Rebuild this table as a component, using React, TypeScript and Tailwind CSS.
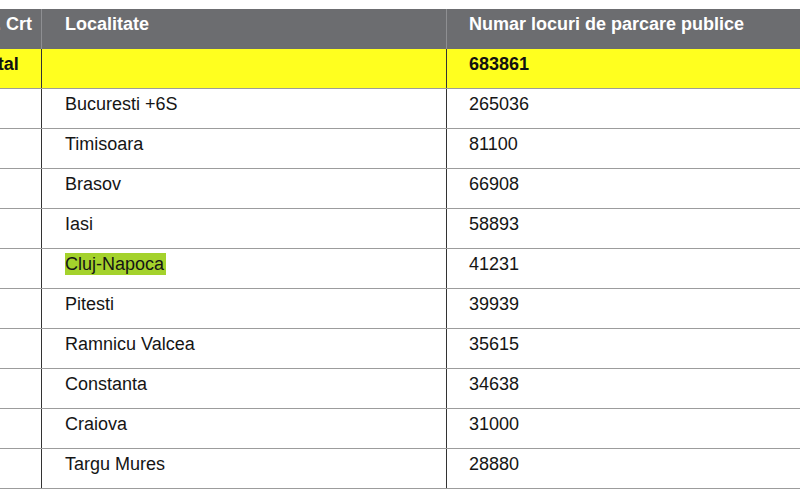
import React from "react"

const rows: [string, string][] = [
    ["Bucuresti +6S", "265036"],
    ["Timisoara", "81100"],
    ["Brasov", "66908"],
    ["Iasi", "58893"],
    ["Cluj-Napoca", "41231"],
    ["Pitesti", "39939"],
    ["Ramnicu Valcea", "35615"],
    ["Constanta", "34638"],
    ["Craiova", "31000"],
    ["Targu Mures", "28880"],
]

const grid = "grid grid-cols-[88px_405px_420px] h-[40px] text-[18px] leading-[20px]"

const App = () => {
    return (
        <div
            className="w-[800px] h-[497px] overflow-hidden bg-white pt-[9px]"
            style={{ fontFamily: '"Liberation Sans", Arial, sans-serif' }}
        >
            <div className="ml-[-47px] w-[913px]">
                {/* header */}
                <div className={`${grid} bg-[#6c6d70] text-white font-bold`}>
                    <div className="pl-[24px] pt-[5px]">Nr. Crt</div>
                    <div className="border-l border-[#8e8f92] pl-[23px] pt-[5px]">
                        Localitate
                    </div>
                    <div className="border-l border-[#8e8f92] pl-[22px] pt-[5px]">
                        Numar locuri de parcare publice
                    </div>
                </div>
                {/* total */}
                <div className={`${grid} bg-[#ffff1f] text-[#111] font-bold border-b border-[#9c9c9c]`}>
                    <div className="pl-[24px] pt-[5px]">Total</div>
                    <div className="border-l border-[#333] pl-[23px] pt-[5px]"></div>
                    <div className="border-l border-[#333] pl-[22px] pt-[5px]">683861</div>
                </div>
                {rows.map(([city, count], i) => (
                    <div
                        key={i}
                        className={`${grid} text-[#151515] border-b border-[#9c9c9c]`}
                    >
                        <div></div>
                        <div className="border-l border-[#333] pl-[23px] pt-[5px]">
                            {city === "Cluj-Napoca" ? (
                                <span className="bg-[#a4d22c] py-[1px] pr-[2px]">{city}</span>
                            ) : (
                                city
                            )}
                        </div>
                        <div className="border-l border-[#333] pl-[22px] pt-[5px]">{count}</div>
                    </div>
                ))}
            </div>
        </div>
    )
}

export default App
